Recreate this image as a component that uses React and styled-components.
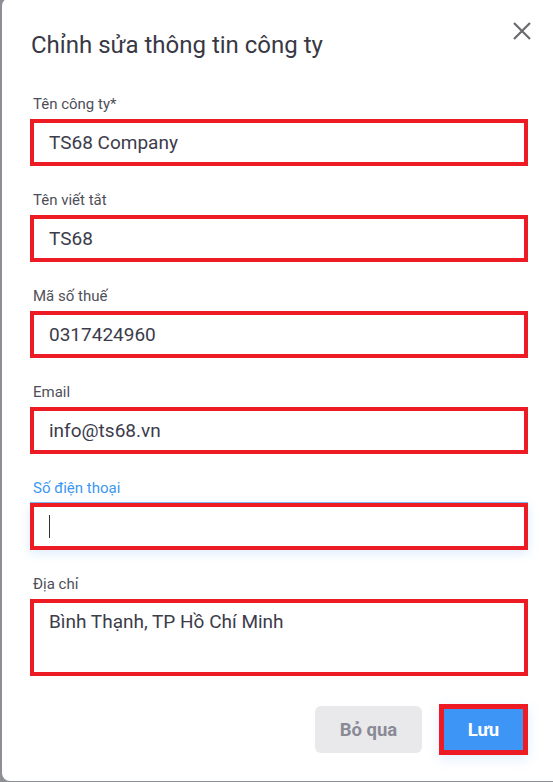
import React from "react"
import styled, { createGlobalStyle } from "styled-components"

const GlobalStyle = createGlobalStyle`
  html, body {
    margin: 0;
    padding: 0;
    background: #ffffff;
    overflow: hidden;
  }
  body {
    font-family: Roboto, "Noto Sans", "Liberation Sans", sans-serif;
  }
`

const Overlay = styled.div`
  box-sizing: border-box;
  width: 100vw;
  height: 100vh;
  padding-left: 2px;
  background: #8e8e95;
  overflow: hidden;
`

const Dialog = styled.div`
  position: relative;
  box-sizing: border-box;
  margin-top: -2px;
  width: calc(100% + 10px);
  height: calc(100% + 1px);
  background: #ffffff;
  border-radius: 8px;
  padding: 31px 0 0 28px;
  display: flex;
  flex-direction: column;
`

const Title = styled.h2`
  margin: 0;
  font-size: 24px;
  line-height: 33px;
  font-weight: 400;
  color: #383845;
  padding-left: 1px;
`

const CloseButton = styled.button`
  position: absolute;
  top: 22px;
  left: 509px;
  width: 22px;
  height: 22px;
  padding: 0;
  border: none;
  background: none;
  cursor: pointer;
  display: flex;
  align-items: center;
  justify-content: center;
`

const Form = styled.form`
  margin-top: 32px;
  display: flex;
  flex-direction: column;
  gap: 24px;
`

const Field = styled.div`
  display: flex;
  flex-direction: column;
  gap: 5px;
`

const Label = styled.label`
  font-size: 15px;
  line-height: 20px;
  padding-left: 3px;
  color: ${(p) => (p.$focused ? "#3b97f2" : "#4f4f58")};
`

const Input = styled.input`
  box-sizing: border-box;
  width: 498px;
  height: 47px;
  border: 4px solid #ed1c24;
  padding: 0 15px;
  font-family: inherit;
  font-size: 19px;
  color: #3c3c4b;
  background: #fff;
  outline: none;
`

const Caret = styled.span`
  display: inline-block;
  width: 1px;
  height: 23px;
  background: #333;
`

const FakeInput = styled.div`
  box-sizing: border-box;
  width: 498px;
  height: 47px;
  border: 4px solid #ed1c24;
  padding: 0 15px;
  display: flex;
  align-items: center;
  background: #fff;
  box-shadow: 0 -1px 0 #7fb6f0, 0 3px 10px rgba(61, 149, 245, 0.18);
`

const TextArea = styled.textarea`
  box-sizing: border-box;
  width: 498px;
  height: 77px;
  border: 4px solid #ed1c24;
  padding: 7px 15px;
  font-family: inherit;
  font-size: 19px;
  line-height: 24px;
  color: #3c3c4b;
  resize: none;
  outline: none;
`

const Footer = styled.div`
  margin-top: 28px;
  width: 498px;
  display: flex;
  justify-content: flex-end;
  align-items: center;
  gap: 17px;
`

const Button = styled.button`
  box-sizing: border-box;
  border-radius: 6px;
  font-family: inherit;
  font-size: 18.5px;
  font-weight: 700;
  cursor: pointer;
  ${(p) =>
    p.$primary
      ? `
    width: 89px;
    height: 51px;
    background: #3d95f5;
    color: #ffffff;
    border: 5px solid #ed1c24;
    border-radius: 0;
    box-shadow: 0 4px 12px rgba(61, 149, 245, 0.15);
  `
      : `
    width: 107px;
    height: 47px;
    background: #e9e9ec;
    color: #8a8a96;
    border: none;
  `}
`

const fields = [
  { label: "Tên công ty*", value: "TS68 Company" },
  { label: "Tên viết tắt", value: "TS68" },
  { label: "Mã số thuế", value: "0317424960" },
  { label: "Email", value: "info@ts68.vn" },
]

export default function App() {
  return (
    <>
      <GlobalStyle />
      <Overlay>
        <Dialog>
          <Title>Chỉnh sửa thông tin công ty</Title>
          <CloseButton type="button" aria-label="Đóng">
            <svg width="20" height="20" viewBox="0 0 20 20">
              <path d="M2 2L18 18M18 2L2 18" stroke="#6a6a6e" strokeWidth="2.2" />
            </svg>
          </CloseButton>
          <Form onSubmit={(e) => e.preventDefault()}>
            {fields.map((f) => (
              <Field key={f.label}>
                <Label>{f.label}</Label>
                <Input defaultValue={f.value} />
              </Field>
            ))}
            <Field>
              <Label $focused>Số điện thoại</Label>
              <FakeInput>
                <Caret />
              </FakeInput>
            </Field>
            <Field>
              <Label>Địa chỉ</Label>
              <TextArea defaultValue="Bình Thạnh, TP Hồ Chí Minh" />
            </Field>
          </Form>
          <Footer>
            <Button type="button">Bỏ qua</Button>
            <Button type="button" $primary>
              Lưu
            </Button>
          </Footer>
        </Dialog>
      </Overlay>
    </>
  )
}
